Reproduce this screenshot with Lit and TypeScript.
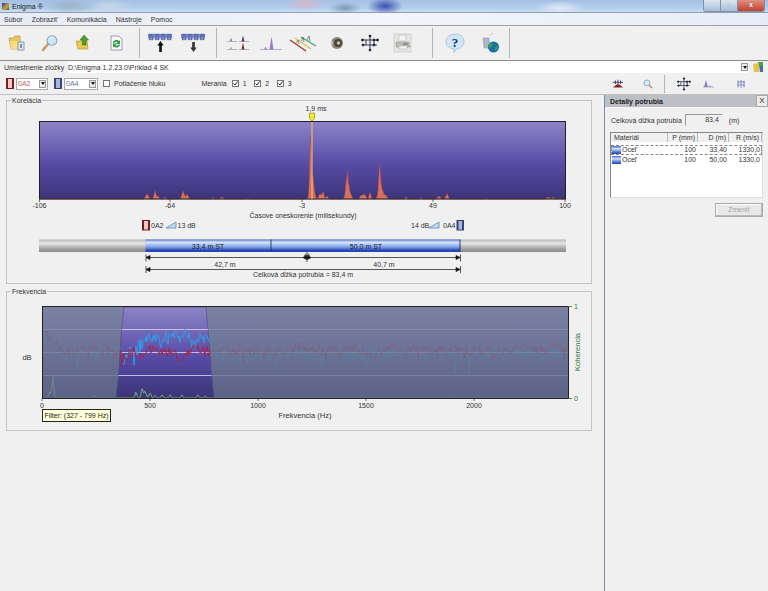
import { LitElement, html, css, svg } from "lit";
import { customElement } from "lit/decorators.js";

const FONT = css`"Liberation Sans", Arial, sans-serif`;

// small repeatable random so the noise is the same on every load
function rng(seed: number) {
  let s = seed;
  return () => {
    s = (s * 16807) % 2147483647;
    return s / 2147483647;
  };
}

const ic = {
  folder: svg`<svg width="18" height="18" viewBox="0 0 18 18"><path d="M1 4h5l1-2h5v3l1 10H3z" fill="#e8c858" stroke="#b09030" stroke-width=".6"/><path d="M2 7h9l1 8H3z" fill="#f4dc80"/><rect x="10" y="8" width="6" height="8" fill="#dfe6ee" stroke="#6a7c96" stroke-width=".7"/><rect x="12" y="10" width="2" height="4" fill="#7f93ad"/></svg>`,
  search: svg`<svg width="18" height="18" viewBox="0 0 18 18"><path d="M7 10l-5 6" stroke="#c89a58" stroke-width="2.4" stroke-linecap="round"/><circle cx="11" cy="6.5" r="4.8" fill="#cfe6f8" stroke="#8aa6c4" stroke-width="1.1"/><path d="M8.5 5a3 3 0 0 1 3-1.5" stroke="#fff" fill="none"/></svg>`,
  folderUp: svg`<svg width="18" height="18" viewBox="0 0 18 18"><path d="M2 7h5l1-1h5l1 9H4z" fill="#e8c850" stroke="#b09030" stroke-width=".6"/><path d="M10 1l4.500 5H12v5H8.500V6H6z" fill="#4c9c30" stroke="#2a6c1c" stroke-width=".5"/></svg>`,
  refresh: svg`<svg width="18" height="18" viewBox="0 0 18 18"><path d="M4 2h8l3 3v11H4z" fill="#f4f6f8" stroke="#8090a0" stroke-width=".8"/><path d="M6 9a3.500 3.500 0 0 1 6-2l1-1v4h-4l1.500-1.500a2 2 0 0 0-3 .5z" fill="#30a040"/><path d="M13 10.500a3.500 3.500 0 0 1-6 2l-1 1v-4h4l-1.500 1.500a2 2 0 0 0 3-.5z" fill="#30a040"/></svg>`,
  printer: svg`<svg width="20" height="20" viewBox="0 0 20 20"><rect x="1" y="1" width="17" height="18" fill="#e6e6e2" stroke="#c8c8c4" stroke-width=".7"/><path d="M6 2h7v6H6z" fill="#f4f4f4" stroke="#a8a8a8" stroke-width=".5"/><path d="M3 9h13l1 5H3z" fill="#bdbdb8" stroke="#8c8c88" stroke-width=".5"/><path d="M6 13h8v3H6z" fill="#f4f4f2" stroke="#999" stroke-width=".4"/><path d="M10 11h5" stroke="#666"/></svg>`,
  help: svg`<svg width="20" height="20" viewBox="0 0 20 20"><path d="M10 1c5 0 9 3 9 7.500S15 16 11.500 16L9 19.500V16C5 15.500 1 13 1 8.500S5 1 10 1z" fill="#cfe6f6" stroke="#9ab8d0" stroke-width=".7"/><text x="10" y="13.500" text-anchor="middle" font-size="13" font-weight="700" fill="#16307c" font-family="Liberation Serif">?</text></svg>`,
  globe: svg`<svg width="20" height="22" viewBox="0 0 20 22"><path d="M2 6h6l1 10H3z" fill="#aeb6cc" stroke="#8490ac" stroke-width=".5"/><path d="M8 4l4-3" stroke="#ccc"/><circle cx="12.500" cy="15" r="5.500" fill="#1a70a8"/><path d="M9 11c2 0 3 1 3 2s-2 2-3 3-2-3 0-5zM14 15l3-1c0 2-1 4-3 5z" fill="#38a048"/></svg>`,
  speaker: svg`<svg width="16" height="16" viewBox="0 0 16 16"><circle cx="8" cy="8" r="6" fill="#8c8678"/><circle cx="9" cy="8" r="4" fill="#4a4438"/><circle cx="9.500" cy="8" r="1.800" fill="#c8c2b0"/><path d="M4 3l2-1M3 6v4" stroke="#e0dccc"/></svg>`,
};

function sensors(arrow: "up" | "down") {
  const cells = [0.5, 6.500, 12.500, 18.500];
  return svg`<svg width="25" height="20" viewBox="0 0 25 20">
    ${cells.map((x) => svg`<path d="M${x} 1h5.200v3l-.8 3h-1.300v-3h-1v3h-1.300L${x} 4z" fill="#6070b8" stroke="#48569c" stroke-width=".4"/>`)}
    ${arrow === "up"
      ? svg`<path d="M12.500 8l3.200 4.500H13.800V19h-2.600v-6.500H9.300z" fill="#111"/>`
      : svg`<path d="M12.500 19l3.200-4.500H13.800V9h-2.600v5.500H9.300z" fill="#333"/>`}
  </svg>`;
}

const peaksDouble = svg`<svg width="22" height="18" viewBox="0 0 22 18">
  <path d="M0 7.500h10M12 7.500h10M0 15.500h10M12 15.500h10" stroke="#999" stroke-width=".7"/>
  <path d="M2.500 7.500l1.500-4 1.500 4z" fill="#a080c8"/><path d="M14.500 7.500l1.500-6 1.500 6z" fill="#3a3a90"/>
  <path d="M2.500 15.500l1.500-3 1.500 3z" fill="#90c080"/><path d="M14.500 15.500l1.500-7 1.500 7z" fill="#8a2828"/>
</svg>`;
const peakSingle = svg`<svg width="22" height="18" viewBox="0 0 22 18">
  <path d="M0 15.500h22" stroke="#a49cc8" stroke-width=".8"/>
  <path d="M4 15.500l1.500-3 1.500 3zM9.500 15.500l2-13 2 13z" fill="#9c78c8"/>
</svg>`;
const waterfall = svg`<svg width="28" height="18" viewBox="0 0 28 18" fill="none" stroke-width="1.100">
  <path d="M0 6l16 11" stroke="#a02828"/><path d="M5 4l16 11" stroke="#d8c040"/><path d="M11 3l15 9" stroke="#38a070"/>
  <path d="M6 9l2-3 1 4M11 7l2-4 1 5M17 6l2-4 1 5" stroke="#506068" stroke-width=".7"/>
</svg>`;
function network(size: number) {
  return svg`<svg width="${size}" height="${size}" viewBox="0 0 18 18" stroke="#1e2440" stroke-width=".9" fill="#1e2440">
    <path d="M1 6h16M2 11h14M9 1v16M5 6v5M13 6v5" fill="none"/>
    <circle cx="1.500" cy="6" r="1"/><circle cx="16.500" cy="6" r="1"/><circle cx="2" cy="11" r="1"/><circle cx="9" cy="2" r="1"/><circle cx="9" cy="16" r="1"/><circle cx="13" cy="11" r="1"/><circle cx="13" cy="6" r="1"/>
  </svg>`;
}
const tower = svg`<svg width="12" height="12" viewBox="0 0 14 12"><path d="M1 4h12" stroke="#203060"/><path d="M4 2v4M10 2v4" stroke="#203060"/><path d="M7 1v7" stroke="#602020"/><path d="M1 10h12L8.500 6.500h-3z" fill="#8c2020"/></svg>`;
const miniSearch = svg`<svg width="10" height="10" viewBox="0 0 10 10"><path d="M6 6l3 3" stroke="#c09040" stroke-width="1.500"/><circle cx="4" cy="4" r="3" fill="#d8ecf8" stroke="#7c9cbc" stroke-width=".8"/></svg>`;
const miniPeak = svg`<svg width="11" height="9" viewBox="0 0 11 9"><path d="M0 8h11" stroke="#b0a8d0"/><path d="M1 8l2-7 2 7zM6 8l1-2 1 2z" fill="#9080c0"/></svg>`;
const miniFan = svg`<svg width="10" height="10" viewBox="0 0 10 10" stroke="#8084b8" stroke-width=".9" fill="none"><path d="M1 3h8M2 1.500v7M5 1v8M8 1.500v7M1 6h8"/></svg>`;
const treeIcon = svg`<svg width="12" height="12" viewBox="0 0 12 12"><path d="M1 3l5-1 1 2 .5 7H2z" fill="#e4c448"/><path d="M6 1h5v9H8z" fill="#50a048"/><path d="M8 5h3v6H8z" fill="#3c6cc0"/></svg>`;

function sensorBar(color: string, dark: string) {
  return html`<svg width="8" height="11" viewBox="0 0 8 11"><rect width="8" height="11" fill="${dark}"/><rect x="2" y="1" width="4" height="9" fill="${color}"/></svg>`;
}

@customElement("correlation-panel")
export class CorrelationPanel extends LitElement {
  static styles = css`
    :host { display: block; }
    .group { position: relative; height: 182px; border: 1px solid #c4c4c4; }
    .legend { position: absolute; left: 4px; top: -5px; padding: 0 1px; font-size: 7px; line-height: 9px; background: #f0f0f0; color: #333; }
    svg.chart { display: block; font-family: ${FONT}; font-size: 7px; fill: #333; }
  `;

  // one height per pixel column, made of narrow peaks and a bit of noise
  areaPath() {
    const peaks = [
      [147, 5, 1.500], [155, 8, 1], [158, 3, 1], [165, 2, 1], [183, 8, 1.200], [187, 5, 1.300], [213, 1.500, 1], [222, 2, 1.500], [247, 1, 2],
      [310.500, 44, 0.800], [312, 24, 1.800], [320, 5, 1.200], [323, 7, 1], [327, 3, 1], [347, 19, 1.100], [348.500, 11, 2], [362, 5, 1.500], [365, 4, 1], [370, 7, 0.900], [379.500, 24, 0.900], [381, 12, 2.200], [386, 3, 1], [406, 2, 1],
      [421, 1.500, 1], [439, 3, 1.500], [447, 5, 1.300], [486, 1, 2], [548, 2, 1.500], [553, 1.500, 1.500], [560, 1, 1],
    ];
    const r = rng(77);
    let d = "M40 199";
    for (let x = 40; x <= 565; x += 0.5) {
      let h = 0;
      for (const [c, a, w] of peaks) h += a * Math.exp(-((x - c) ** 2) / (2 * w * w));
      h *= h > 1 ? 0.8 + r() * 0.3 : 0.4;
      d += `L${x} ${(199 - h).toFixed(1)}`;
    }
    return d + "L565 199Z";
  }

  render() {
    const ticks: [number, string][] = [[39.500, "-106"], [170, "-64"], [302, "-3"], [433, "49"], [565, "100"]];
    return html`
      <div class="group">
        <span class="legend">Korelácia</span>
        <svg class="chart" width="584" height="181" viewBox="7 101 584 181">
          <defs>
            <linearGradient id="plot" x1="0" y1="0" x2="0" y2="1">
              <stop offset="0" stop-color="#8d84c6"/><stop offset=".55" stop-color="#574ba6"/><stop offset="1" stop-color="#3c3478"/>
            </linearGradient>
            <linearGradient id="pipe" x1="0" y1="0" x2="0" y2="1">
              <stop offset="0" stop-color="#5078d0"/><stop offset=".22" stop-color="#dbe5f8"/><stop offset=".6" stop-color="#7ea2e8"/><stop offset=".88" stop-color="#2444b8"/><stop offset="1" stop-color="#2a48b0"/>
            </linearGradient>
            <linearGradient id="pipeGray" x1="0" y1="0" x2="0" y2="1">
              <stop offset="0" stop-color="#b4b4b4"/><stop offset=".3" stop-color="#e6e6e6"/><stop offset=".75" stop-color="#a0a0a0"/><stop offset="1" stop-color="#8c8c8c"/>
            </linearGradient>
          </defs>
          <rect x="39.500" y="121.500" width="526" height="77.500" fill="url(#plot)"/>
          <path d=${this.areaPath()} fill="#d8705c" stroke="#a04850" stroke-width=".5"/>
          <rect x="39.500" y="121.500" width="526" height="77.500" fill="none" stroke="#222" stroke-width="1"/>
          ${ticks.map(([x, t]) => svg`<path d="M${x} 199v3" stroke="#333" stroke-width=".7"/><text x=${x} y="208" text-anchor="middle">${t}</text>`)}
          <text x="316" y="110.500" text-anchor="middle">1,9 ms</text>
          <path d="M312 122v77" stroke="#e8b868" stroke-width="1.200"/>
          <path d="M309.500 113h5v5.500l-2.500 2.500-2.500-2.500z" fill="#f4ec20" stroke="#807820" stroke-width=".6"/>
          <text x="303" y="218" text-anchor="middle">Časove oneskorenie (milisekundy)</text>

          <rect x="142" y="220" width="8" height="10.500" fill="#702020"/><rect x="144" y="221" width="4" height="8.500" fill="#f0c8c0"/>
          <text x="151" y="227.500">0A2</text>
          <path d="M166 228h10v-6z" fill="#c4dcf0" stroke="#4c80b0" stroke-width=".7"/>
          <text x="177.500" y="227.500">13 dB</text>
          <text x="411" y="227.500">14 dB</text>
          <path d="M429 228h10v-6z" fill="#c4dcf0" stroke="#4c80b0" stroke-width=".7"/>
          <text x="443" y="227.500">0A4</text>
          <rect x="456.500" y="220" width="7.500" height="10.500" fill="#3a4478"/><rect x="458.500" y="221" width="3.500" height="8.500" fill="#a8b8dc"/>

          <rect x="39" y="239.500" width="527" height="12.500" fill="url(#pipeGray)"/>
          <rect x="145.500" y="239.500" width="314.500" height="12.500" fill="url(#pipe)"/>
          <path d="M271 239.500v12.500M460 239.500v12.500" stroke="#203060" stroke-width=".9"/>
          <text x="208" y="248.500" text-anchor="middle" style="fill:#222">33,4 m ST</text>
          <text x="366" y="248.500" text-anchor="middle" style="fill:#222">50,0 m ST</text>

          <g stroke="#111" stroke-width=".7" fill="#111">
            <path d="M146 254.500v7M460.500 254.500v7M146 266v7M460.500 266v7"/>
            <path d="M146 257.500H460M146 269.500H460"/>
            <path d="M146 257.500l4-2v4zM460 257.500l-4-2v4zM146 269.500l4-2v4zM460 269.500l-4-2v4z"/>
            <path d="M303 257.500l3.500-2v4zM311 257.500l-3.500-2v4z"/>
            <path d="M307 252.500l-2.500 3h5z" fill="#f0f0f0"/><path d="M307 254v8"/>
          </g>
          <text x="225" y="266.500" text-anchor="middle">42,7 m</text>
          <text x="384" y="266.500" text-anchor="middle">40,7 m</text>
          <text x="303" y="277" text-anchor="middle">Celková dĺžka potrubia = 83,4 m</text>
        </svg>
      </div>
    `;
  }
}

@customElement("frequency-panel")
export class FrequencyPanel extends LitElement {
  static styles = css`
    :host { display: block; }
    .group { position: relative; height: 138px; border: 1px solid #c4c4c4; }
    .legend { position: absolute; left: 4px; top: -5px; padding: 0 1px; font-size: 7px; line-height: 9px; background: #f0f0f0; color: #333; }
    svg.chart { display: block; font-family: ${FONT}; font-size: 7px; fill: #333; }
    .tip { position: absolute; left: 35px; top: 117px; width: 67px; height: 11px; border: 1px solid #222; background: #ffffd8; font-size: 7px; line-height: 11px; text-align: center; color: #222; }
  `;

  line(seed: number, centre: (x: number) => number, amp: number) {
    const r = rng(seed);
    let d = "";
    let prev = 0;
    for (let x = 44; x <= 568; x += 1) {
      const n = (r() - 0.5) * amp;
      prev = prev * 0.45 + n;
      const dip = r() > 0.96 ? amp * 0.8 : 0;
      d += `${d ? "L" : "M"}${x} ${(centre(x) + prev + dip).toFixed(1)}`;
    }
    return d;
  }

  coherence() {
    const peaks = [[53, 16, 0.800], [51, 7, 2], [95, 2, 1], [136, 6, 1], [142, 10, 0.900], [145, 7, 1.200], [150, 5, 1], [155, 3, 1], [162, 3, 1], [170, 3, 1], [182, 3, 1], [198, 3, 1], [205, 2, 1], [353, 1, 1], [453, 1.500, 1]];
    const r = rng(31);
    let d = "M44 398";
    for (let x = 44; x < 568; x += 0.5) {
      let h = 0;
      for (const [c, a, w] of peaks) h += a * Math.exp(-((x - c) ** 2) / (2 * w * w));
      d += `L${x} ${(398 - h * (0.7 + r() * 0.4)).toFixed(1)}`;
    }
    return d;
  }

  render() {
    const blueC = (x: number) => {
      if (x < 60) return 337 + (x - 44) * 0.8;
      if (x < 122) return 351;
      if (x < 145) return 362 - (x - 122) * 1.100;
      if (x < 212) return 337 + Math.sin(x / 6) * 2;
      return 355;
    };
    const redC = (x: number) => {
      if (x < 60) return 335 + (x - 44) * 0.8;
      if (x < 122) return 349;
      if (x < 212) return 352 + Math.sin(x / 9) * 2;
      return 350;
    };
    const blue = this.line(11, blueC, 13);
    const red = this.line(23, redC, 10);
    const band = "M124 307L121.500 329.500L118.700 375L116 398H214L211.500 375L208 329.500L206 307Z";
    const ticks: [number, string][] = [[42, "0"], [150, "500"], [258, "1000"], [366, "1500"], [474, "2000"]];
    return html`
      <div class="group">
        <span class="legend">Frekvencia</span>
        <svg class="chart" width="584" height="138" viewBox="7 292 584 138">
          <defs>
            <linearGradient id="plot2" x1="0" y1="0" x2="0" y2="1">
              <stop offset="0" stop-color="#8d84c6"/><stop offset=".55" stop-color="#574ba6"/><stop offset="1" stop-color="#3c3478"/>
            </linearGradient>
            <linearGradient id="off" x1="0" y1="0" x2="0" y2="1">
              <stop offset="0" stop-color="#7c82a4"/><stop offset="1" stop-color="#5c6286"/>
            </linearGradient>
            <clipPath id="inBand"><path d=${band}/></clipPath>
          </defs>
          <rect x="42.500" y="306.500" width="526" height="92" fill="url(#off)"/>
          <path d="M42.500 329.500H568M42.500 352.500H568M42.500 375.500H568" stroke="#a4a8c0" stroke-width=".6" opacity=".6"/>
          <path d=${blue} fill="none" stroke="#4c88a8" stroke-width=".7" opacity=".6"/>
          <path d=${red} fill="none" stroke="#885068" stroke-width=".7" opacity=".55"/>
          <path d=${this.coherence()} fill="none" stroke="#78a088" stroke-width=".7" opacity=".8"/>
          <path d=${band} fill="url(#plot2)" stroke="#4a4488" stroke-width=".6"/>
          <g clip-path="url(#inBand)">
            <path d="M110 329.500H220M110 352.500H220M110 375.500H220" stroke="#cfcaf0" stroke-width=".9"/>
            <path d=${blue} fill="none" stroke="#2ca0ec" stroke-width=".9"/>
            <path d=${red} fill="none" stroke="#b0203c" stroke-width=".9"/>
            <path d=${this.coherence()} fill="none" stroke="#88d070" stroke-width=".8"/>
          </g>
          <rect x="42.500" y="306.500" width="526" height="92" fill="none" stroke="#222" stroke-width="1"/>
          ${ticks.map(([x, t]) => svg`<path d="M${x} 399v2" stroke="#333" stroke-width=".7"/><text x=${x} y="408" text-anchor="middle">${t}</text>`)}
          <text x="305" y="418" text-anchor="middle" font-size="7.500">Frekvencia (Hz)</text>
          <text x="27" y="360" text-anchor="middle" font-size="7.500">dB</text>
          <path d="M568 306.500h4M568 398.500h4" stroke="#2c7040" stroke-width=".8"/>
          <text x="574" y="309" style="fill:#2c7c40">1</text>
          <text x="574" y="401" style="fill:#2c7c40">0</text>
          <text transform="translate(580 352) rotate(-90)" text-anchor="middle" font-size="7.500" style="fill:#2c7c40">Koherencia</text>
        </svg>
        <div class="tip">Filter: (327 - 799 Hz)</div>
      </div>
    `;
  }
}

@customElement("pipe-details")
export class PipeDetails extends LitElement {
  static styles = css`
    :host { display: flex; flex-direction: column; height: 100%; border-left: 1px solid #7c8aa0; box-sizing: border-box; font-size: 7px; color: #333; }
    .head { display: flex; justify-content: space-between; align-items: center; height: 12px; background: #bcc0c4; padding-left: 5px; font-weight: 700; color: #222; }
    .close { width: 12px; height: 12px; background: #ececec; border: 1px solid #a8a8a8; box-sizing: border-box; text-align: center; line-height: 10px; font-size: 8px; font-weight: 400; }
    .length { display: flex; align-items: center; margin: 7px 0 0 6px; height: 12px; }
    .value { width: 38px; height: 12px; margin-left: 3px; padding-right: 3px; box-sizing: border-box; border: 1px solid #999; border-right-color: #eee; border-bottom-color: #eee; text-align: right; line-height: 10px; }
    .unit { margin-left: 6px; }
    .table { margin: 6px 0 0 5px; width: 153px; height: 66px; box-sizing: border-box; border: 1px solid #888; border-right-color: #ddd; border-bottom-color: #ddd; background: #fff; }
    .row { display: grid; grid-template-columns: 57px 30px 31px 33px; height: 10px; line-height: 10px; }
    .row.header { height: 9px; line-height: 9px; background: #f0f0f0; margin-bottom: 3px; }
    .row.header span { border-right: 1px solid #bbb; padding-left: 3px; }
    .row.header .num { padding: 0 2px 0 0; }
    .num { text-align: right; padding-right: 2px; }
    .row.selected { outline: 1px dashed #888; outline-offset: -1px; }
    .mat { display: flex; align-items: center; gap: 1px; padding-left: 1px; }
    .swatch { width: 9px; height: 8px; background: linear-gradient(#4468c8, #d4e0f8 35%, #6a90e0 65%, #1c3cb0); }
    .actions { display: flex; justify-content: flex-end; margin: 5px 5px 0 0; }
    .btn { width: 48px; height: 14px; box-sizing: border-box; border: 1px solid #aaa; background: #e8e8e8; color: #a4a4a4; text-align: center; line-height: 12px; box-shadow: inset -1px -1px 0 #bbb, inset 1px 1px 0 #fff; }
  `;

  render() {
    const rows = [
      { p: "100", d: "33,40", r: "1330,0", sel: true },
      { p: "100", d: "50,00", r: "1330,0", sel: false },
    ];
    return html`
      <div class="head"><span>Detaily potrubia</span><span class="close">X</span></div>
      <div class="length"><span>Celková dĺžka potrubia</span><span class="value">83,4</span><span class="unit">(m)</span></div>
      <div class="table">
        <div class="row header"><span>Materiál</span><span class="num">P (mm)</span><span class="num">D (m)</span><span class="num">R (m/s)</span></div>
        ${rows.map((r) => html`
          <div class="row ${r.sel ? "selected" : ""}">
            <span class="mat"><i class="swatch"></i>Oceľ</span>
            <span class="num">${r.p}</span><span class="num">${r.d}</span><span class="num">${r.r}</span>
          </div>`)}
      </div>
      <div class="actions"><div class="btn">Zmeniť</div></div>
    `;
  }
}

@customElement("app-root")
export class AppRoot extends LitElement {
  static styles = css`
    :host { display: block; width: 768px; height: 591px; overflow: hidden; background: #f0f0f0; font-family: ${FONT}; font-size: 7px; color: #333; }

    .title { display: flex; align-items: center; gap: 3px; height: 13px; padding-left: 2px;
      background:
        radial-gradient(30px 8px at 70px 6px, #9cb4c8 0, transparent 100%),
        radial-gradient(24px 10px at 110px 8px, #c8d8e8 0, transparent 100%),
        radial-gradient(20px 7px at 305px 4px, #d8b8c8 0, transparent 100%),
        radial-gradient(18px 9px at 385px 6px, #3c50b0 0, transparent 100%),
        radial-gradient(16px 6px at 345px 8px, #8098b8 0, transparent 100%),
        radial-gradient(26px 7px at 560px 8px, #e0eaf6 0, transparent 100%),
        linear-gradient(#a4c0e4, #b4cdec 70%, #cfdff2); color: #222; border-bottom: 1px solid #8e9cb0; box-sizing: border-box; }
    .logo { width: 7px; height: 7px; background: linear-gradient(135deg, #1c3c7c, #d8a040 60%, #206830); }
    .winbtns { margin-left: auto; margin-right: 3px; display: flex; height: 12px; align-self: flex-start; border: 1px solid #8090a8; border-top: 0; border-radius: 0 0 3px 3px; overflow: hidden; box-sizing: border-box; }
    .winbtns span { width: 16px; background: linear-gradient(#dce6f2, #a8bcd4); border-right: 1px solid #8090a8; text-align: center; line-height: 10px; color: #fff; font-size: 7px; font-weight: 700; text-shadow: 0 0 1px #444; }
    .winbtns .x { width: 26px; background: linear-gradient(#e09080, #c04030); border: 0; }

    .menu { display: flex; gap: 9px; height: 12px; padding-left: 4px; align-items: center; background: linear-gradient(90deg, #e6ebf6, #f2f5fb 50%, #e6ecf8); border-bottom: 1px solid #a0a0a0; }

    .toolbar { display: flex; align-items: center; height: 35px; background: #f0f0f0; box-sizing: border-box; border-bottom: 1px solid #8c8c8c; }
    .tool { display: flex; justify-content: center; align-items: center; width: 33px; flex: none; }
    .sep { width: 1px; height: 30px; background: #b4b4b4; flex: none; }
    .t-wide { width: 36px; }
    .sp4 { width: 4px; }
    .sp6 { width: 6px; }
    .sp7 { width: 7px; }
    .sp13 { width: 13px; }

    .pathrow { display: flex; align-items: center; height: 12px; background: #f0f0f0; }
    .pathrow label { width: 68px; padding-left: 4px; box-sizing: border-box; }
    .pathbox { display: flex; justify-content: space-between; align-items: center; width: 681px; height: 12px; background: #fff; box-sizing: border-box; }
    .dd { display: flex; align-items: center; justify-content: center; width: 7px; height: 8px; background: #ececec; border: 1px solid #999; box-sizing: border-box; margin-right: 1px; }
    .dd::before { content: ""; border: 2px solid transparent; border-top: 3px solid #111; border-bottom: 0; }
    .treeicon { margin-left: 3px; display: flex; }

    .controls { display: flex; align-items: center; height: 22px; padding-left: 6px; border-bottom: 1px solid #c0c0c0; box-sizing: border-box; }
    .combo { display: flex; align-items: center; justify-content: space-between; height: 12px; margin-left: 2px; padding-left: 1px; box-sizing: border-box; border: 1px solid #aaa; background: #fff; }
    .combo.red { width: 32px; color: #b86060; margin-right: 6px; }
    .combo.blue { width: 34px; color: #6074a8; margin-right: 5px; }
    .check { display: inline-flex; width: 7px; height: 7px; box-sizing: border-box; border: 1px solid #777; background: #fff; margin-right: 4px; }
    .measures { display: flex; align-items: center; margin-left: 36px; }
    .measures .check { margin-left: 5px; margin-right: 4px; }
    .measures b { font-weight: 400; width: 6.5px; }
    .mini { margin-left: auto; display: flex; align-items: center; height: 21px; padding-right: 6px; }
    .mini span { display: flex; justify-content: center; width: 24px; }
    .mini .tower { width: 36px; }
    .mini .fan { width: 42px; }
    .mini i { width: 1px; height: 18px; background: #b4b4b4; margin: 0 7px 0 4px; }

    .main { display: grid; grid-template-columns: 604px 164px; height: 496px; }
    .left { display: flex; flex-direction: column; gap: 7px; padding: 5px 12px 0 6px; }
  `;

  render() {
    const checked = html`<span class="check"><svg width="5" height="5" viewBox="0 0 5 5"><path d="M.5 2.500L2 4 4.500 .5" fill="none" stroke="#222"/></svg></span>`;
    return html`
      <div class="title">
        <i class="logo"></i><span>Enigma ®</span>
        <div class="winbtns"><span>–</span><span>▫</span><span class="x">x</span></div>
      </div>
      <div class="menu"><span>Súbor</span><span>Zobraziť</span><span>Komunikácia</span><span>Nástroje</span><span>Pomoc</span></div>
      <div class="toolbar">
        <span class="tool">${ic.folder}</span><span class="tool">${ic.search}</span><span class="tool">${ic.folderUp}</span><span class="tool">${ic.refresh}</span>
        <span class="sp7"></span><i class="sep"></i>
        <span class="sp4"></span>
        <span class="tool">${sensors("up")}</span><span class="tool">${sensors("down")}</span>
        <span class="sp6"></span><i class="sep"></i>
        <span class="sp4"></span>
        <span class="tool">${peaksDouble}</span><span class="tool">${peakSingle}</span><span class="tool">${waterfall}</span><span class="tool">${ic.speaker}</span><span class="tool">${network(18)}</span><span class="tool">${ic.printer}</span>
        <span class="sp13"></span><i class="sep"></i>
        <span class="sp4"></span>
        <span class="tool t-wide">${ic.help}</span><span class="tool t-wide">${ic.globe}</span>
        <i class="sep"></i>
      </div>
      <div class="pathrow">
        <label>Umiestnenie zložky</label>
        <div class="pathbox"><span>D:\\Enigma 1.2.23.0\\Príklad 4 SK</span><i class="dd"></i></div>
        <span class="treeicon">${treeIcon}</span>
      </div>
      <div class="controls">
        ${sensorBar("#f0c8c0", "#702020")}
        <div class="combo red"><span>0A2</span><i class="dd"></i></div>
        ${sensorBar("#a8b8dc", "#3a4478")}
        <div class="combo blue"><span>0A4</span><i class="dd"></i></div>
        <span class="check"></span><span>Potlačenie hluku</span>
        <div class="measures">
          <span>Merania</span>
          ${checked}<b>1</b>${checked}<b>2</b>${checked}<b>3</b>
        </div>
        <div class="mini">
          <span class="tower">${tower}</span><span>${miniSearch}</span><i></i>
          <span>${network(14)}</span><span>${miniPeak}</span><span class="fan">${miniFan}</span>
        </div>
      </div>
      <div class="main">
        <div class="left">
          <correlation-panel></correlation-panel>
          <frequency-panel></frequency-panel>
        </div>
        <pipe-details></pipe-details>
      </div>
    `;
  }
}
